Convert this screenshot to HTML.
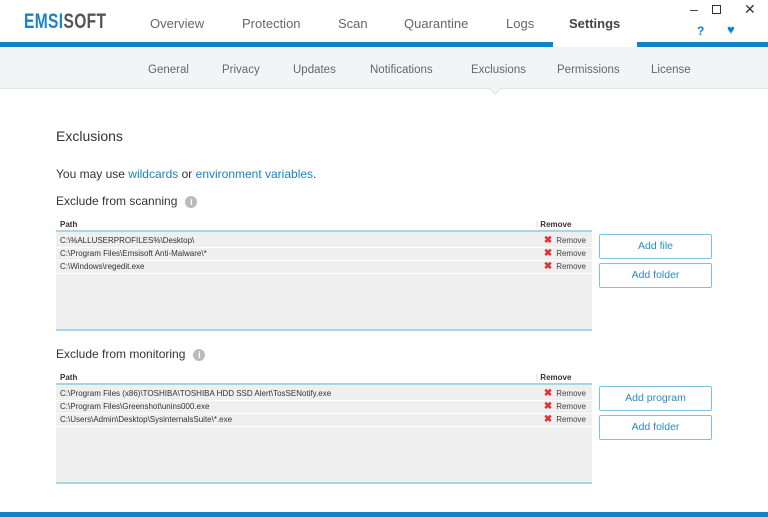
<!DOCTYPE html>
<html><head><meta charset="utf-8"><style>
*{margin:0;padding:0;box-sizing:border-box}
body{width:768px;height:517px;background:#fff;font-family:"Liberation Sans",sans-serif;position:relative;overflow:hidden;color:#333}
.abs{position:absolute}
.logo{left:24px;top:10px;font-size:21px;font-weight:bold;letter-spacing:0.5px;transform:scaleX(0.74);transform-origin:left}
.nav{top:16px;font-size:13px;color:#666}
.sub{top:64px;font-size:11.5px;color:#666}
.tbl{left:56px;width:536px;background:#efefef;border-bottom:2px solid #a8d4ea}
.th{position:absolute;left:56px;width:536px;height:13px;font-size:8px;font-weight:bold;color:#333;border-bottom:2px solid #a8d4ea;background:#fff}
.row{position:absolute;left:56px;width:536px;height:13px;border-bottom:1px solid #fff;font-size:8px;line-height:12px;padding-left:4px;color:#333}
.rm{position:absolute;right:6px;top:0;color:#444}
.rm b{color:#d33;font-size:10px;margin-right:4px}
.btn{position:absolute;left:599px;width:113px;height:25px;border:1px solid #7fc0e3;color:#2a8ac8;font-size:10.5px;text-align:center;line-height:23px;border-radius:2px}
.info{display:inline-block;width:12px;height:12px;border-radius:50%;background:#bbb;color:#fff;font-size:9px;text-align:center;line-height:12px;font-weight:bold;vertical-align:middle;margin-left:8px}
</style></head><body>
<div class="abs logo"><span style="color:#1b82c5">EMSI</span><span style="color:#555">SOFT</span></div>
<div class="abs nav" style="left:150px">Overview</div>
<div class="abs nav" style="left:242px">Protection</div>
<div class="abs nav" style="left:338px">Scan</div>
<div class="abs nav" style="left:404px">Quarantine</div>
<div class="abs nav" style="left:506px">Logs</div>
<div class="abs" style="left:553px;top:0;width:84px;height:47px;background:#fff;z-index:2"></div>
<div class="abs nav" style="left:569px;font-weight:bold;color:#444;z-index:3">Settings</div>
<div class="abs" style="left:0;top:42px;width:768px;height:5px;background:#1283c7"></div>
<div class="abs" style="left:0;top:47px;width:768px;height:42px;background:#f2f5f6;border-bottom:1px solid #e4e7e8"></div>
<div class="abs" style="left:553px;top:42px;width:84px;height:5px;background:#f2f5f6"></div>
<div class="abs" style="left:690px;top:1px;font-size:14px;color:#333">–</div>
<div class="abs" style="left:712px;top:5px;width:9px;height:9px;border:1px solid #333"></div>
<div class="abs" style="left:744px;top:1px;font-size:14px;color:#333">✕</div>
<div class="abs" style="left:697px;top:24px;font-size:12px;font-weight:bold;color:#1283c7">?</div>
<div class="abs" style="left:727px;top:22px;font-size:13px;color:#1283c7">♥</div>
<div class="abs sub" style="left:148px">General</div>
<div class="abs sub" style="left:222px">Privacy</div>
<div class="abs sub" style="left:293px">Updates</div>
<div class="abs sub" style="left:370px">Notifications</div>
<div class="abs sub" style="left:471px">Exclusions</div>
<div class="abs sub" style="left:557px">Permissions</div>
<div class="abs sub" style="left:651px">License</div>
<div class="abs" style="left:489px;top:89px;width:0;height:0;border-left:6px solid transparent;border-right:6px solid transparent;border-top:6px solid #e4e7e8"></div>
<div class="abs" style="left:490px;top:88px;width:0;height:0;border-left:5px solid transparent;border-right:5px solid transparent;border-top:5px solid #f2f5f6"></div>

<div class="abs" style="left:56px;top:128px;font-size:14px;color:#333">Exclusions</div>
<div class="abs" style="left:56px;top:167px;font-size:12px">You may use <span style="color:#1b82c5">wildcards</span> or <span style="color:#1b82c5">environment variables</span>.</div>
<div class="abs" style="left:56px;top:194px;font-size:12px">Exclude from scanning<span class="info">i</span></div>

<div class="abs tbl" style="top:219px;height:112px"></div>
<div class="th" style="top:219px"><span style="position:absolute;left:4px;top:1px">Path</span><span style="position:absolute;left:480px;top:1px"><span style="color:#ccc;font-weight:normal">|</span> Remove</span></div>
<div class="row" style="top:235px">C:\%ALLUSERPROFILES%\Desktop\<span class="rm"><b>✖</b>Remove</span></div>
<div class="row" style="top:248px">C:\Program Files\Emsisoft Anti-Malware\*<span class="rm"><b>✖</b>Remove</span></div>
<div class="row" style="top:261px">C:\Windows\regedit.exe<span class="rm"><b>✖</b>Remove</span></div>
<div class="btn" style="top:234px">Add file</div>
<div class="btn" style="top:263px">Add folder</div>

<div class="abs" style="left:56px;top:347px;font-size:12px">Exclude from monitoring<span class="info">i</span></div>
<div class="abs tbl" style="top:372px;height:112px"></div>
<div class="th" style="top:372px"><span style="position:absolute;left:4px;top:1px">Path</span><span style="position:absolute;left:480px;top:1px"><span style="color:#ccc;font-weight:normal">|</span> Remove</span></div>
<div class="row" style="top:388px">C:\Program Files (x86)\TOSHIBA\TOSHIBA HDD SSD Alert\TosSENotify.exe<span class="rm"><b>✖</b>Remove</span></div>
<div class="row" style="top:401px">C:\Program Files\Greenshot\unins000.exe<span class="rm"><b>✖</b>Remove</span></div>
<div class="row" style="top:414px">C:\Users\Admin\Desktop\SysinternalsSuite\*.exe<span class="rm"><b>✖</b>Remove</span></div>
<div class="btn" style="top:386px">Add program</div>
<div class="btn" style="top:415px">Add folder</div>

<div class="abs" style="left:0;top:512px;width:768px;height:5px;background:#1283c7"></div>
</body></html>
